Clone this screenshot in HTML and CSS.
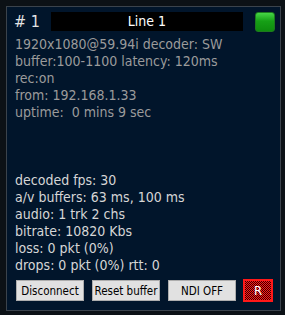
FILE: index.html
```html
<!DOCTYPE html>
<html>
<head>
<meta charset="utf-8">
<link rel="stylesheet" href="styles.css">
</head>
<body>
<div class="panel">
  <div class="header">
    <div class="num"># 1</div>
    <div class="title">Line 1</div>
    <div class="led"></div>
  </div>
  <div class="info">
    <div class="line">1920x1080@59.94i decoder: SW</div>
    <div class="line">buffer:100-1100 latency: 120ms</div>
    <div class="line">rec:on</div>
    <div class="line">from: 192.168.1.33</div>
    <div class="line">uptime:&nbsp; 0 mins 9 sec</div>
  </div>
  <div class="stats">
    <div class="line">decoded fps: 30</div>
    <div class="line">a/v buffers: 63 ms, 100 ms</div>
    <div class="line">audio: 1 trk 2 chs</div>
    <div class="line">bitrate: 10820 Kbs</div>
    <div class="line">loss: 0 pkt (0%)</div>
    <div class="line">drops: 0 pkt (0%) rtt: 0</div>
  </div>
  <div class="buttons">
    <button class="btn">Disconnect</button>
    <button class="btn">Reset buffer</button>
    <button class="btn">NDI OFF</button>
    <button class="btn-r">R</button>
  </div>
</div>
</body>
</html>
```
FILE: styles.css
```css
html, body {
  margin: 0;
  padding: 0;
  background: #0c1116;
}
body {
  width: 285px;
  height: 315px;
  overflow: hidden;
  font-family: "DejaVu Sans Condensed", "DejaVu Sans", sans-serif;
}
.panel {
  box-sizing: border-box;
  width: 275px;
  height: 305px;
  margin: 6px;
  border: 1px solid #3b434c;
  background: #01152b;
  padding: 4px 5px 0 7px;
  display: flex;
  flex-direction: column;
}
.header {
  display: flex;
  align-items: center;
  height: 21px;
}
.num {
  width: 37px;
  font-size: 16px;
  color: #e4e4e4;
  font-family: "DejaVu Sans Condensed", "DejaVu Sans", sans-serif;
}
.title {
  width: 192px;
  height: 19px;
  background: #000;
  color: #fff;
  font-size: 14px;
  line-height: 19px;
  text-align: center;
}
.led {
  box-sizing: border-box;
  width: 20px;
  height: 20px;
  margin-left: 12px;
  border-radius: 3px;
  border: 1px solid #1d7a1d;
  background: linear-gradient(#46d646, #16a016 45%, #0e8c0e);
}
.info {
  margin-top: 4px;
  padding-left: 1px;
  color: #9b9b9b;
  font-size: 14px;
  line-height: 17px;
}
.stats {
  margin-top: 51px;
  padding-left: 1px;
  color: #d6d6d6;
  font-size: 14px;
  line-height: 17px;
}
.line {
  white-space: nowrap;
}
.buttons {
  display: flex;
  align-items: center;
  margin-top: 5px;
  padding-left: 2px;
  gap: 8px;
}
.btn {
  box-sizing: border-box;
  width: 68px;
  height: 21px;
  padding: 0;
  border: 1px solid #adadad;
  background: #e1e1e1;
  color: #000;
  font-family: "DejaVu Sans Condensed", "DejaVu Sans", sans-serif;
  font-size: 11.5px;
}
.btn-r {
  box-sizing: border-box;
  width: 30px;
  height: 23px;
  margin-left: -1px;
  padding: 0;
  border: 2px solid #ff1818;
  background: repeating-conic-gradient(#ff1a1a 0 25%, #3a0000 0 50%) 0 0 / 2px 2px;
  color: #fff;
  font-family: "DejaVu Sans Condensed", "DejaVu Sans", sans-serif;
  font-size: 13px;
}
```
